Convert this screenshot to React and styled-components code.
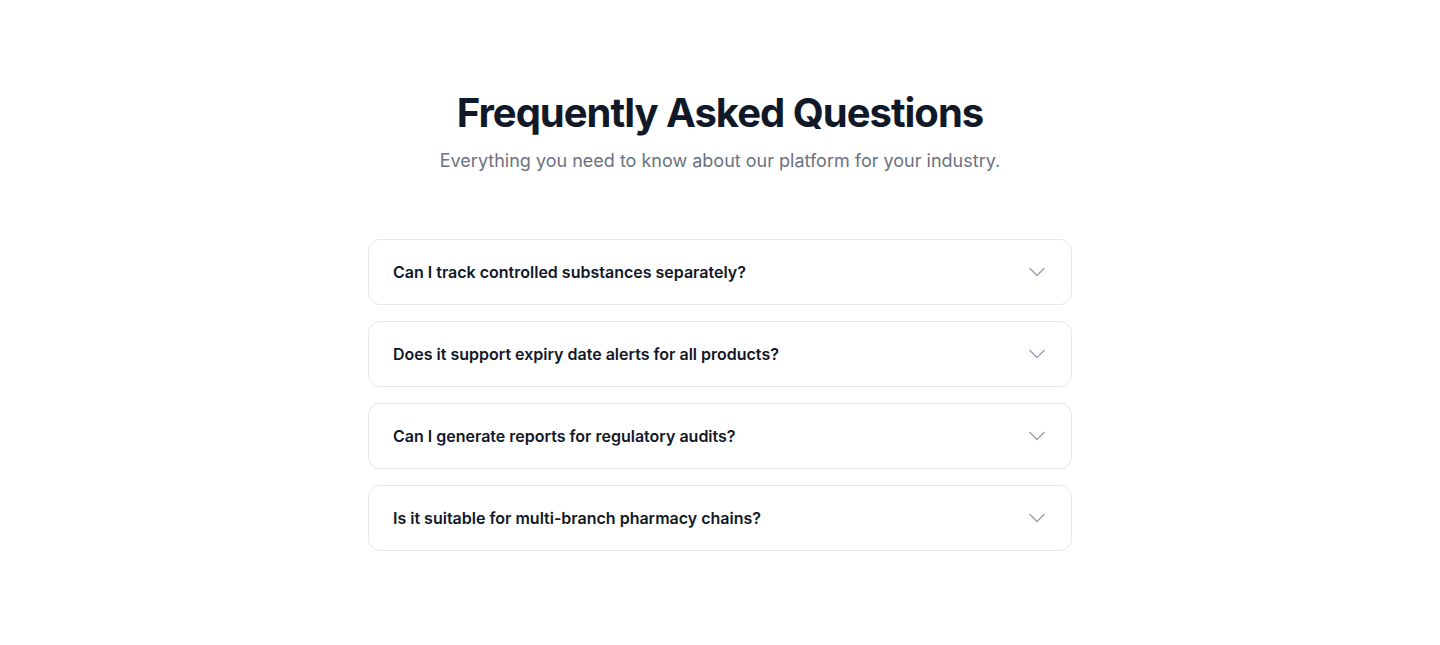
import React, { useState } from "react";
import styled, { createGlobalStyle } from "styled-components";

const GlobalStyle = createGlobalStyle`
  body {
    margin: 0;
    background: #ffffff;
    font-family: Inter, "Noto Sans", sans-serif;
    -webkit-font-smoothing: antialiased;
  }
`;

const Section = styled.section`
  padding: 89px 24px 80px;
  display: flex;
  flex-direction: column;
  align-items: center;
`;

const Header = styled.div`
  text-align: center;
  margin-bottom: 64px;
`;

const Title = styled.h2`
  margin: 0;
  font-size: 40px;
  line-height: 48px;
  font-weight: 700;
  letter-spacing: -0.025em;
  color: #111827;
`;

const Subtitle = styled.p`
  margin: 10px 0 0;
  font-size: 18px;
  line-height: 28px;
  color: #6b7280;
`;

const List = styled.div`
  width: 704px;
  display: flex;
  flex-direction: column;
  gap: 16px;
`;

const Item = styled.div`
  border: 1px solid #e5e7eb;
  border-radius: 12px;
  background: #fff;
`;

const Question = styled.button`
  width: 100%;
  display: flex;
  align-items: center;
  justify-content: space-between;
  padding: 20px 24px;
  border: none;
  background: transparent;
  cursor: pointer;
  font-family: inherit;
  font-size: 16px;
  line-height: 24px;
  font-weight: 600;
  color: #111827;
  text-align: left;
`;

const Chevron = styled.svg`
  width: 20px;
  height: 20px;
  flex-shrink: 0;
  color: #9ca3af;
  transition: transform 0.2s;
  transform: rotate(${(p) => (p.$open ? "180deg" : "0deg")});
`;

const Answer = styled.div`
  padding: 0 24px 20px;
  font-size: 15px;
  line-height: 24px;
  color: #4b5563;
`;

const faqs = [
  {
    q: "Can I track controlled substances separately?",
    a: "Yes. Controlled substances can be flagged and tracked in their own register with full audit history.",
  },
  {
    q: "Does it support expiry date alerts for all products?",
    a: "Every batch carries its expiry date and you get alerts well before products expire.",
  },
  {
    q: "Can I generate reports for regulatory audits?",
    a: "Audit-ready reports can be exported at any time in PDF or spreadsheet format.",
  },
  {
    q: "Is it suitable for multi-branch pharmacy chains?",
    a: "Yes, manage stock, staff and reports across all your branches from one account.",
  },
];

export default function App() {
  const [open, setOpen] = useState(null);

  return (
    <>
      <GlobalStyle />
      <Section>
        <Header>
          <Title>Frequently Asked Questions</Title>
          <Subtitle>
            Everything you need to know about our platform for your industry.
          </Subtitle>
        </Header>
        <List>
          {faqs.map((f, i) => (
            <Item key={f.q}>
              <Question onClick={() => setOpen(open === i ? null : i)}>
                {f.q}
                <Chevron
                  $open={open === i}
                  viewBox="0 0 20 20"
                  fill="none"
                  stroke="currentColor"
                  strokeWidth="1.5"
                  strokeLinecap="round"
                  strokeLinejoin="round"
                >
                  <path d="M3 6.5l7 7 7-7" />
                </Chevron>
              </Question>
              {open === i && <Answer>{f.a}</Answer>}
            </Item>
          ))}
        </List>
      </Section>
    </>
  );
}
